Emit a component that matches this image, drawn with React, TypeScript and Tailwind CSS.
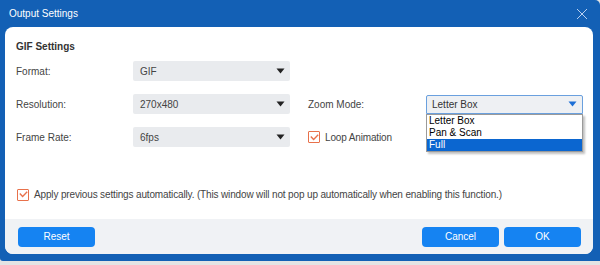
import type { ReactNode } from "react";

const font = { fontFamily: '"Liberation Sans", Arial, sans-serif' };

function Caret({ blue }: { blue?: boolean }) {
  return (
    <svg width="9" height="6" viewBox="0 0 9 6" aria-hidden>
      <path d="M0.5 0.5h8L4.5 5.5z" fill={blue ? "#1c6fd6" : "#222"} />
    </svg>
  );
}

function Select({ value, active }: { value: string; active?: boolean }) {
  return (
    <div
      className={
        active
          ? "flex h-[19px] w-[157px] items-center justify-between rounded-t-[2px] border border-[#6aa0de] bg-[#eef0f3] pl-[5px] pr-[5px] text-[10px] text-[#333]"
          : "flex h-[20px] w-[157px] items-center justify-between rounded-[2px] bg-[#e9ebee] pl-[7px] pr-[5px] text-[10px] text-[#444]"
      }
    >
      <span>{value}</span>
      <Caret blue={active} />
    </div>
  );
}

function Check({ children }: { children: ReactNode }) {
  return (
    <div className="flex items-center gap-[5px]">
      <span className="flex h-[12px] w-[12px] items-center justify-center rounded-[1px] border-[1.5px] border-[#e8714b] bg-white">
        <svg width="9" height="7" viewBox="0 0 9 7" aria-hidden>
          <path d="M0.8 2.6 3.6 5.4 8.2 0.8" fill="none" stroke="#e8714b" strokeWidth="1.4" />
        </svg>
      </span>
      <span className="text-[10px] tracking-[-0.15px] text-[#444]">{children}</span>
    </div>
  );
}

function Label({ children, w }: { children: ReactNode; w: string }) {
  return <span className={`${w} shrink-0 text-[10px] text-[#444]`}>{children}</span>;
}

function Btn({ children }: { children: ReactNode }) {
  return (
    <button
      type="button"
      className="flex h-[20px] w-[77px] items-center justify-center rounded-[4px] bg-[#1583f2] text-[10px] text-white"
    >
      {children}
    </button>
  );
}

export default function App() {
  return (
    <div className="h-[265px] w-[600px] bg-[#e4e4e4]" style={font}>
      <div className="flex h-[261px] flex-col rounded-tr-[5px] rounded-bl-[3px] bg-[#1360b5] pb-[7px] pl-[5px] pr-[7px]">
        <div className="flex h-[27px] shrink-0 items-center justify-between">
          <span className="ml-[4px] text-[10px] text-white">Output Settings</span>
          <svg className="mr-[5px]" width="12" height="12" viewBox="0 0 12 12" aria-hidden>
            <path d="M1 1l10 10M11 1 1 11" stroke="#b8cff0" strokeWidth="1" />
          </svg>
        </div>
        <div className="flex flex-1 flex-col rounded-[8px] bg-white">
          <div className="flex flex-1 flex-col pl-[11px] pt-[14px]">
            <div className="text-[10px] font-bold leading-[12px] text-[#333]">GIF Settings</div>
            <div className="mt-[8px] flex flex-col gap-[13px]">
              <div className="flex items-center">
                <Label w="w-[117px]">Format:</Label>
                <Select value="GIF" />
              </div>
              <div className="flex items-center">
                <Label w="w-[117px]">Resolution:</Label>
                <Select value="270x480" />
                <span className="w-[18px]" />
                <Label w="w-[118px]">Zoom Mode:</Label>
                <div className="relative">
                  <Select value="Letter Box" active />
                  <div className="absolute left-0 top-[19px] z-10 flex w-[157px] flex-col border border-[#9a9a9a] bg-white text-[10px] leading-[12px] text-black shadow-[2px_2px_2px_rgba(0,0,0,0.25)]">
                    <span className="pl-[2px]">Letter Box</span>
                    <span className="pl-[2px]">Pan &amp; Scan</span>
                    <span className="bg-[#0b66d0] pl-[2px] text-white">Full</span>
                  </div>
                </div>
              </div>
              <div className="flex items-center">
                <Label w="w-[117px]">Frame Rate:</Label>
                <Select value="6fps" />
                <span className="w-[18px]" />
                <Check>Loop Animation</Check>
              </div>
            </div>
            <div className="ml-[1px] mt-[40px]">
              <Check>
                Apply previous settings automatically. (This window will not pop up automatically when enabling this
                function.)
              </Check>
            </div>
          </div>
          <div className="flex h-[35px] shrink-0 items-center justify-between rounded-b-[8px] bg-[#f0f2f5] pl-[13px] pr-[12px]">
            <Btn>Reset</Btn>
            <div className="flex gap-[5px]">
              <Btn>Cancel</Btn>
              <Btn>OK</Btn>
            </div>
          </div>
        </div>
      </div>
    </div>
  );
}
